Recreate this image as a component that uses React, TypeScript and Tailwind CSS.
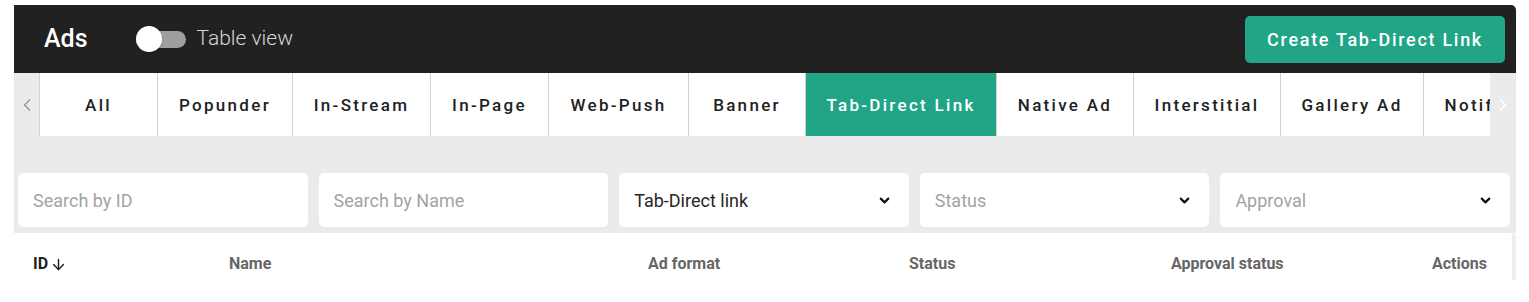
import { ArrowDown, ChevronDown, ChevronLeft, ChevronRight } from "lucide-react";

const tabs = [
  { label: "All", w: "w-[118px]" },
  { label: "Popunder", w: "w-[135px]" },
  { label: "In-Stream", w: "w-[138px]" },
  { label: "In-Page", w: "w-[118px]" },
  { label: "Web-Push", w: "w-[140px]" },
  { label: "Banner", w: "w-[117px]" },
  { label: "Tab-Direct Link", w: "w-[191px]", active: true },
  { label: "Native Ad", w: "w-[137px]" },
  { label: "Interstitial", w: "w-[147px]" },
  { label: "Gallery Ad", w: "w-[143px]" },
  { label: "Notifications", w: "w-[170px]" },
];

const filters = [
  { label: "Search by ID" },
  { label: "Search by Name" },
  { label: "Tab-Direct link", select: true, value: true },
  { label: "Status", select: true },
  { label: "Approval", select: true },
];

const columns = [
  { label: "Name", w: "w-[419px]" },
  { label: "Ad format", w: "w-[261px]" },
  { label: "Status", w: "w-[262px]" },
  { label: "Approval status", w: "w-[261px]" },
  { label: "Actions", w: "" },
];

export default function App() {
  return (
    <div className="bg-white h-[302px] pt-[5px] pl-[14px] font-['Roboto',sans-serif]">
      <div className="w-[1502px]">
        {/* header */}
        <div className="h-[68px] bg-[#212121] rounded-tr-[5px] flex items-center pl-[30px] pr-[11px]">
          <h1 className="text-[25px] font-medium text-white">Ads</h1>
          <div className="relative ml-[48px] w-[50px] h-[26px] flex items-center">
            <div className="w-[50px] h-[17px] rounded-full bg-[#9e9e9e]" />
            <div className="absolute left-0 top-0 w-[26px] h-[26px] rounded-full bg-white shadow" />
          </div>
          <span className="ml-[11px] text-[21px] font-light text-[#d6d6d6]">Table view</span>
          <button className="ml-auto w-[260px] h-[47px] mt-[1px] rounded-[5px] bg-[#22a587] text-white text-[18px] font-medium tracking-[1.7px]">
            Create Tab-Direct Link
          </button>
        </div>

        {/* tabs */}
        <div className="h-[63px] bg-[#ebebeb] flex">
          <div className="w-[25px] flex items-center justify-center text-[#9a9a9a]">
            <ChevronLeft size={20} strokeWidth={2} />
          </div>
          <div className="w-[1451px] overflow-hidden flex border-l border-[#d2d2d2]">
            {tabs.map((t) => (
              <div
                key={t.label}
                className={`${t.w} shrink-0 flex items-center justify-center pt-[2px] text-[17px] font-medium tracking-[2.3px] border-r border-[#d2d2d2] ${
                  t.active ? "bg-[#22a587] text-white" : "bg-white text-[#222]"
                }`}
              >
                {t.label}
              </div>
            ))}
          </div>
          <div className="w-[26px] flex items-center justify-center text-white">
            <ChevronRight size={20} strokeWidth={2} />
          </div>
        </div>

        {/* filters */}
        <div className="bg-[#ebebeb] pt-[37px] pb-[6px] pl-[4px] pr-[6px] flex gap-[11px]">
          {filters.map((f) => (
            <div
              key={f.label}
              className="flex-1 h-[54px] rounded-[5px] bg-white flex items-center pl-[15px] pr-[17px]"
            >
              <span className={`text-[18px] ${f.value ? "text-[#262626]" : "text-[#a3a3a3]"}`}>{f.label}</span>
              {f.select && <ChevronDown size={15} strokeWidth={3.5} className="ml-auto text-[#111]" />}
            </div>
          ))}
        </div>

        {/* table header */}
        <div className="h-[47px] pt-[15px] bg-white rounded-tr-[5px] flex items-center pl-[19px] text-[16px] font-bold text-[#666] border-r-[4px] border-[#ededed]">
          <div className="w-[196px] flex items-center text-[#1f1f1f]">
            ID
            <ArrowDown size={17} strokeWidth={2} className="ml-[2px]" />
          </div>
          {columns.map((c) => (
            <div key={c.label} className={c.w}>
              {c.label}
            </div>
          ))}
        </div>
      </div>
    </div>
  );
}
